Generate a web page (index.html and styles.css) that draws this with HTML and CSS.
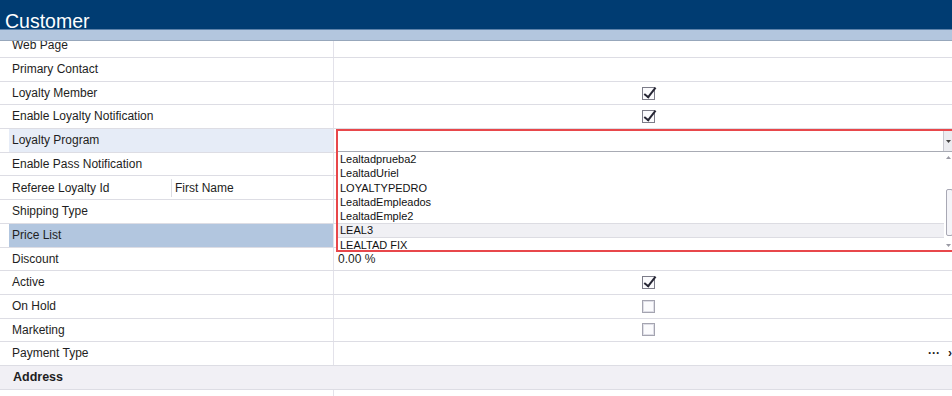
FILE: index.html
```html
<!DOCTYPE html>
<html>
<head>
  <title>Customer</title>
  <link rel="stylesheet" href="styles.css">
</head>
<body>

  <div class="screen">
    <div class="title-bar">Customer</div>
    <div class="title-strip"></div>

    <div class="sheet">
      <div class="row first">
        <div class="label">Web Page</div>
        <div class="value"></div>
      </div>
      <div class="row">
        <div class="label">Primary Contact</div>
        <div class="value"></div>
      </div>
      <div class="row">
        <div class="label">Loyalty Member</div>
        <div class="value center"><span class="check on"></span></div>
      </div>
      <div class="row">
        <div class="label">Enable Loyalty Notification</div>
        <div class="value center"><span class="check on"></span></div>
      </div>
      <div class="row focus">
        <div class="label">Loyalty Program</div>
        <div class="value"></div>
      </div>
      <div class="row">
        <div class="label">Enable Pass Notification</div>
        <div class="value"></div>
      </div>
      <div class="row">
        <div class="label split">
          <span class="part">Referee Loyalty Id</span>
          <span class="sub">First Name</span>
        </div>
        <div class="value"></div>
      </div>
      <div class="row">
        <div class="label">Shipping Type</div>
        <div class="value"></div>
      </div>
      <div class="row selected">
        <div class="label">Price List</div>
        <div class="value"></div>
      </div>
      <div class="row">
        <div class="label">Discount</div>
        <div class="value">0.00 %</div>
      </div>
      <div class="row">
        <div class="label">Active</div>
        <div class="value center"><span class="check on"></span></div>
      </div>
      <div class="row">
        <div class="label">On Hold</div>
        <div class="value center"><span class="check"></span></div>
      </div>
      <div class="row">
        <div class="label">Marketing</div>
        <div class="value center"><span class="check"></span></div>
      </div>
      <div class="row">
        <div class="label">Payment Type</div>
        <div class="value end"><span class="dots">···</span><span class="more">›</span></div>
      </div>
      <div class="row section">Address</div>
      <div class="row">
        <div class="label"></div>
        <div class="value"></div>
      </div>

      <!-- open lookup of Loyalty Program -->
      <div class="lookup">
        <div class="lookup-input">
          <span class="lookup-btn">
            <svg width="5" height="3" viewBox="0 0 5 3"><path d="M0 0h5L2.5 3z" fill="#444"/></svg>
          </span>
        </div>
        <div class="lookup-body">
          <ul class="options">
            <li>Lealtadprueba2</li>
            <li>LealtadUriel</li>
            <li>LOYALTYPEDRO</li>
            <li>LealtadEmpleados</li>
            <li>LealtadEmple2</li>
            <li class="hot">LEAL3</li>
            <li>LEALTAD FIX</li>
          </ul>
          <div class="scroll">
            <svg width="5" height="3" viewBox="0 0 5 3"><path d="M2.5 0L5 3H0z" fill="#9a9aa4"/></svg>
            <span class="thumb"></span>
            <svg width="5" height="3" viewBox="0 0 5 3"><path d="M0 0h5L2.5 3z" fill="#9a9aa4"/></svg>
          </div>
        </div>
      </div>
    </div>
  </div>

</body>
</html>
```

FILE: styles.css
```css
html, body {
  margin: 0;
  padding: 0;
}

body {
  font-family: 'Liberation Sans', Arial, sans-serif;
  font-size: 12px;
  color: #1e1e22;
  background-color: white;
  overflow: hidden;
}

.screen {
  width: 952px;
  height: 396px;
  overflow: hidden;
}

.title-bar {
  height: 30px;
  box-sizing: border-box;
  padding: 11px 0 0 5px;
  background-color: #003c72;
  color: white;
  font-size: 19.5px;
  line-height: 20px;
  overflow: hidden;
}

.title-strip {
  height: 10px;
  border-top: 1px solid #5d82aa;
  border-bottom: 1px solid #97a7bb;
  background-color: #b3c6de;
  margin-top: -1px;
}

.sheet {
  position: relative;
  height: 355px;
  overflow: hidden;
  width: 962px;
}

.row {
  display: grid;
  grid-template-columns: 334px 1fr;
  height: 23.7px;
  box-sizing: border-box;
  border-bottom: 1px solid #dddde4;
  line-height: 22px;
}

.row.first {
  margin-top: -6.7px;
}

.label {
  padding-left: 12px;
  border-right: 1px solid #e3e2ea;
  white-space: nowrap;
}

.row.focus .label {
  background: linear-gradient(to right, transparent 9px, #e6ecf7 9px);
}

.row.selected .label {
  background: linear-gradient(to right, transparent 9px, #b2c6df 9px);
}

.label.split {
  display: flex;
  align-items: center;
}

.label.split .part {
  width: 159px;
  border-right: 1px solid #dcdce2;
  line-height: 18px;
}

.label.split .sub {
  padding-left: 3px;
}

.value {
  padding-left: 4px;
}

.value.center {
  display: flex;
  align-items: center;
  justify-content: center;
  padding-left: 0;
}

.value.end {
  display: flex;
  justify-content: flex-end;
  padding-right: 10px;
}

.dots {
  font-weight: bold;
  margin-right: 8px;
}

.more {
  font-weight: bold;
}

.check {
  width: 13px;
  height: 13px;
  box-sizing: border-box;
  border: 1px solid #a4a4b0;
  box-shadow: inset 0 0 0 1px #dedee6;
  background-color: #fbfbfd;
  position: relative;
}

.check.on {
  border-color: #7c7c88;
  box-shadow: none;
}

.check.on::after {
  content: "";
  position: absolute;
  left: 4px;
  top: -3px;
  width: 4px;
  height: 11px;
  border-right: 2px solid #262634;
  border-bottom: 2px solid #262634;
  transform: rotate(38deg);
}

.row.section {
  display: block;
  padding-left: 13px;
  font-weight: bold;
  font-size: 12.5px;
  background-color: #f1f0f5;
}

.lookup {
  position: absolute;
  left: 336px;
  top: 88px;
  width: 618px;
  height: 123px;
  box-sizing: border-box;
  border: 2px solid #e8474b;
  background-color: white;
  display: flex;
  flex-direction: column;
}

.lookup-input {
  height: 20px;
  border-bottom: 1px solid #a8abb4;
  display: flex;
  justify-content: flex-end;
}

.lookup-btn {
  width: 8px;
  background-color: #ececf0;
  border-left: 1px solid #c8c8d0;
  display: flex;
  align-items: center;
  justify-content: center;
}

.lookup-body {
  flex: 1;
  display: flex;
  overflow: hidden;
}

.options {
  flex: 1;
  list-style: none;
  margin: 0;
  padding: 0;
  font-size: 11px;
  color: #111;
}

.options li {
  height: 14.3px;
  line-height: 14px;
  padding-left: 2px;
  box-sizing: border-box;
}

.options li.hot {
  background-color: #f0f0f4;
  border-top: 1px solid #dcdce2;
  border-bottom: 1px solid #dcdce2;
  line-height: 12px;
}

.scroll {
  width: 8px;
  display: flex;
  flex-direction: column;
  align-items: center;
  padding: 4px 0 3px;
  box-sizing: border-box;
}

.scroll .thumb {
  flex: 1;
  width: 5px;
  margin: 30px 0 8px 3px;
  border: 1px solid #a8a8b4;
  border-radius: 2px;
  background-color: #f4f4f8;
}
```
